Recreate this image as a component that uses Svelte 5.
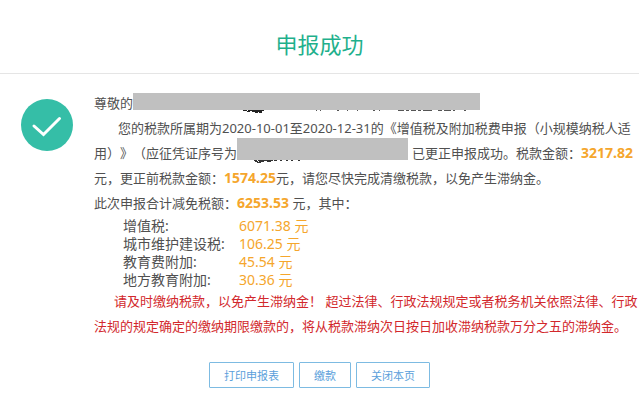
<script>
const taxes = [
  { name: "增值税", amount: "6071.38" },
  { name: "城市维护建设税", amount: "106.25" },
  { name: "教育费附加", amount: "45.54" },
  { name: "地方教育附加", amount: "30.36" },
];
const actions = ["打印申报表", "缴款", "关闭本页"];
</script>

<main class="result">
  <header>
    <h1>申报成功</h1>
  </header>

  <div class="body">
    <svg class="ok" viewBox="0 0 52 52" aria-hidden="true">
      <circle cx="26" cy="26" r="26" fill="#35bea7" />
      <path d="M13 27 L22.5 35.5 L38.5 19.5" fill="none" stroke="#fff" stroke-width="3" stroke-linecap="round" />
    </svg>

    <div class="content">
      <p>
        尊敬的<span class="mask name">
          <!-- scraps of the name left under the mask -->
          <svg class="scraps" width="347" height="3" viewBox="0 0 347 3" aria-hidden="true">
            <path d="M110 .5h4 M115 .5h16 M114 1.5h3 M119 1.5h10 M122 2.5h3 M126 2.5h3" stroke="#222" />
            <path d="M183 .5h1 M187 .5h1 M204 .5h2 M214 .5h1 M224 .5h1 M240 .5h2 M246 .5h1 M265 .5h6 M273 .5h3 M278 .5h5 M285 .5h3 M290 .5h9 M305 .5h4 M311 .5h7 M320 .5h2 M331 .5h2" stroke="#555" />
          </svg>
        </span>
      </p>
      <p class="indent">
        您的税款所属期为2020-10-01至2020-12-31的《增值税及附加税费申报（小规模纳税人适<br />用）》（应征凭证序号为<span class="mask serial">
          <svg class="scraps" width="171" height="3" viewBox="0 0 171 3" aria-hidden="true">
            <path d="M17 .5h3 M21 .5h15 M37 .5h3 M43 .5h2 M49 .5h2 M54 .5h2 M61 .5h2 M18 1.5h3 M22 1.5h5 M30 1.5h4 M20 2.5h4" stroke="#333" />
          </svg>
        </span>已更正申报成功。税款金额：<b>3217.82</b><br />元，更正前税款金额：<b>1574.25</b>元，请您尽快完成清缴税款，以免产生滞纳金。
      </p>
      <p>此次申报合计减免税额：<b>6253.53</b> 元，其中：</p>

      <dl>
        {#each taxes as tax}
          <dt>{tax.name}:</dt>
          <dd>{tax.amount} 元</dd>
        {/each}
      </dl>

      <p class="indent warning">
        请及时缴纳税款，以免产生滞纳金！ 超过法律、行政法规规定或者税务机关依照法律、行政<br />法规的规定确定的缴纳期限缴款的，将从税款滞纳次日按日加收滞纳税款万分之五的滞纳金。
      </p>
    </div>
  </div>

  <footer>
    {#each actions as label}
      <button type="button">{label}</button>
    {/each}
  </footer>
</main>

<style>
:global(body) {
  margin: 0;
  background: #fff;
}
.result {
  overflow: hidden;
  font-family: "Noto Sans", "Noto Sans CJK SC", sans-serif;
  font-size: 13px;
  color: #505050;
  text-spacing-trim: space-all;
}
header {
  padding: 28px 0 13px;
  border-bottom: 1px solid #e5e5e5;
  text-align: center;
}
h1 {
  margin: 0;
  font-size: 22px;
  font-weight: 400;
  line-height: 32px;
  color: #1fb08c;
}
.body {
  display: flex;
  gap: 21px;
  padding: 17px 0 0 21px;
}
.ok {
  flex: none;
  width: 52px;
  height: 52px;
  margin-top: 8px;
}
.content {
  flex: 1;
  min-width: 0;
}
p {
  margin: 0;
  line-height: 25px;
  white-space: nowrap;
}
.indent {
  text-indent: 24px;
}
b {
  font-size: 14px;
  font-weight: 700;
  line-height: 1;
  color: #f5a62c;
}
.mask {
  display: inline-block;
  position: relative;
  background: #c0c0c0;
  line-height: 0;
  vertical-align: top;
}
.name {
  width: 347px;
  height: 17px;
  margin-top: 2px;
}
.serial {
  width: 171px;
  height: 22px;
  margin: -3px 4px 0 0;
}
.scraps {
  position: absolute;
  top: 100%;
  left: 0;
}
dl {
  display: grid;
  grid-template-columns: 116px 1fr;
  margin: 1px 0 0 29px;
  font-size: 14px;
  line-height: 18px;
}
dd {
  margin: 0;
  color: #f5a62c;
}
.warning {
  text-indent: 20px;
  color: #d2282c;
}
footer {
  display: flex;
  justify-content: center;
  gap: 5px;
  padding: 23px 0;
}
button {
  height: 26px;
  padding: 0 14px;
  border: 1px solid #7dbbe2;
  border-radius: 1px;
  background: #fff;
  font: inherit;
  font-size: 11px;
  color: #5b9fdb;
}
</style>
